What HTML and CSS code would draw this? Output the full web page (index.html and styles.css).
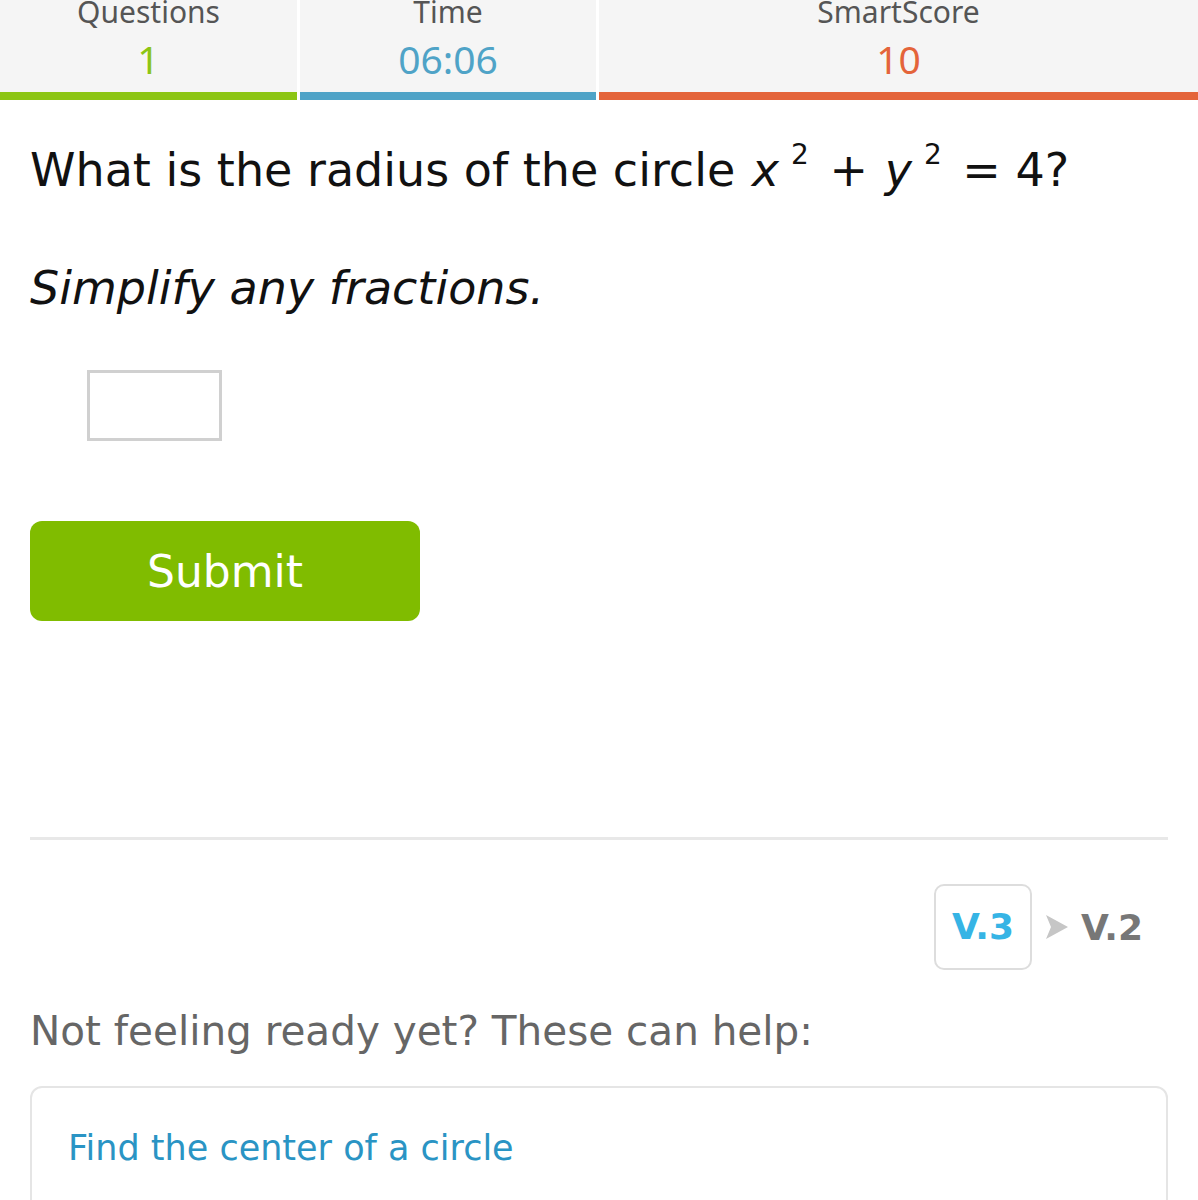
FILE: index.html
```html
<!DOCTYPE html>
<html lang="en">
<head>
    <meta charset="UTF-8">
    <meta name="viewport" content="width=device-width, initial-scale=1.0">
    <title>Practice - Radius of a circle</title>
    <link rel="stylesheet" href="styles.css">
</head>
<body>
    <header class="stats">
        <div class="stat stat-questions">
            <span class="stat-label">Questions</span>
            <span class="stat-value">1</span>
        </div>
        <div class="stat stat-time">
            <span class="stat-label">Time</span>
            <span class="stat-value">06:06</span>
        </div>
        <div class="stat stat-score">
            <span class="stat-label">SmartScore</span>
            <span class="stat-value">10</span>
        </div>
    </header>

    <main>
        <section class="question">
            <p class="prompt">What is the radius of the circle <span class="math"><i>x</i><sup>2</sup> + <i>y</i><sup>2</sup> = 4</span>?</p>
            <p class="hint">Simplify any fractions.</p>
            <div class="answer">
                <input type="text" class="answer-box" aria-label="Answer">
            </div>
            <button class="submit">Submit</button>
        </section>

        <hr class="divider">

        <div class="versions">
            <span class="version current">V.3</span>
            <svg class="chevron" width="22" height="24" viewBox="0 0 22 24">
                <path d="M0 0 L22 12 L0 24 L5 12 Z" fill="#c6c6c6"/>
            </svg>
            <span class="version">V.2</span>
        </div>

        <p class="help-title">Not feeling ready yet? These can help:</p>
        <div class="help-card">
            <a href="#" class="help-link">Find the center of a circle</a>
        </div>
    </main>
</body>
</html>
```

FILE: styles.css
```css
body {
    margin: 0;
    padding: 0;
    background: #fff;
    font-family: "DejaVu Sans", Verdana, sans-serif;
    color: #111;
    overflow: hidden;
}

.stats {
    display: grid;
    grid-template-columns: 297px 296px 1fr;
    column-gap: 3px;
    margin-top: -8px;
    background: #fff;
}

.stat {
    display: flex;
    flex-direction: column;
    align-items: center;
    background: #f5f5f5;
    height: 108px;
    border-bottom: 8px solid;
    box-sizing: border-box;
    font-family: "Noto Sans", "Open Sans", sans-serif;
}

.stat-label {
    font-size: 30px;
    line-height: 40px;
    color: #555;
}

.stat-value {
    margin-top: 4px;
    font-size: 39px;
    line-height: 46px;
}

.stat-questions { border-color: #8cc514; }
.stat-questions .stat-value { color: #8cc514; }
.stat-time { border-color: #4fa3c7; }
.stat-time .stat-value { color: #4fa3c7; }
.stat-score { border-color: #e4643a; }
.stat-score .stat-value { color: #e4643a; }

main {
    padding: 0 30px;
}

.question {
    display: flex;
    flex-direction: column;
    align-items: flex-start;
}

.prompt {
    margin: 38px 0 0;
    font-size: 46px;
    line-height: 64px;
    color: #111;
}

.math i {
    margin-left: 2px;
}

.math sup {
    font-size: 28px;
    vertical-align: 22px;
    line-height: 0;
    margin-left: 12px;
    margin-right: 6px;
}

.hint {
    margin: 54px 0 0;
    font-size: 46px;
    line-height: 64px;
    font-style: italic;
    color: #111;
}

.answer {
    padding: 50px 0 0 57px;
}

.answer-box {
    display: block;
    width: 135px;
    height: 71px;
    box-sizing: border-box;
    border: 3px solid #d0d0d0;
    background: #fff;
}

.submit {
    margin-top: 80px;
    width: 390px;
    height: 100px;
    border: none;
    border-radius: 12px;
    background: #80bc00;
    color: #fff;
    font-family: "DejaVu Sans", Verdana, sans-serif;
    font-size: 44px;
    cursor: pointer;
}

.divider {
    margin: 216px 0 0;
    border: none;
    border-top: 3px solid #e8e8e8;
}

.versions {
    display: flex;
    justify-content: flex-end;
    align-items: center;
    margin-top: 44px;
    padding-right: 25px;
}

.chevron {
    margin: 0 13px 0 14px;
}

.version {
    font-size: 36px;
    font-weight: bold;
    color: #777;
}

.version.current {
    color: #36b4e5;
    border: 2px solid #ddd;
    border-radius: 10px;
    padding: 0 16px;
    height: 82px;
    line-height: 82px;
}

.help-title {
    margin: 36px 0 0;
    font-size: 40.5px;
    line-height: 50px;
    color: #666;
}

.help-card {
    margin-top: 30px;
    border: 2px solid #e5e5e5;
    border-radius: 12px;
    height: 200px;
    padding: 40px 36px;
    box-sizing: border-box;
}

.help-link {
    font-size: 35px;
    color: #2a94c4;
    text-decoration: none;
}
```
